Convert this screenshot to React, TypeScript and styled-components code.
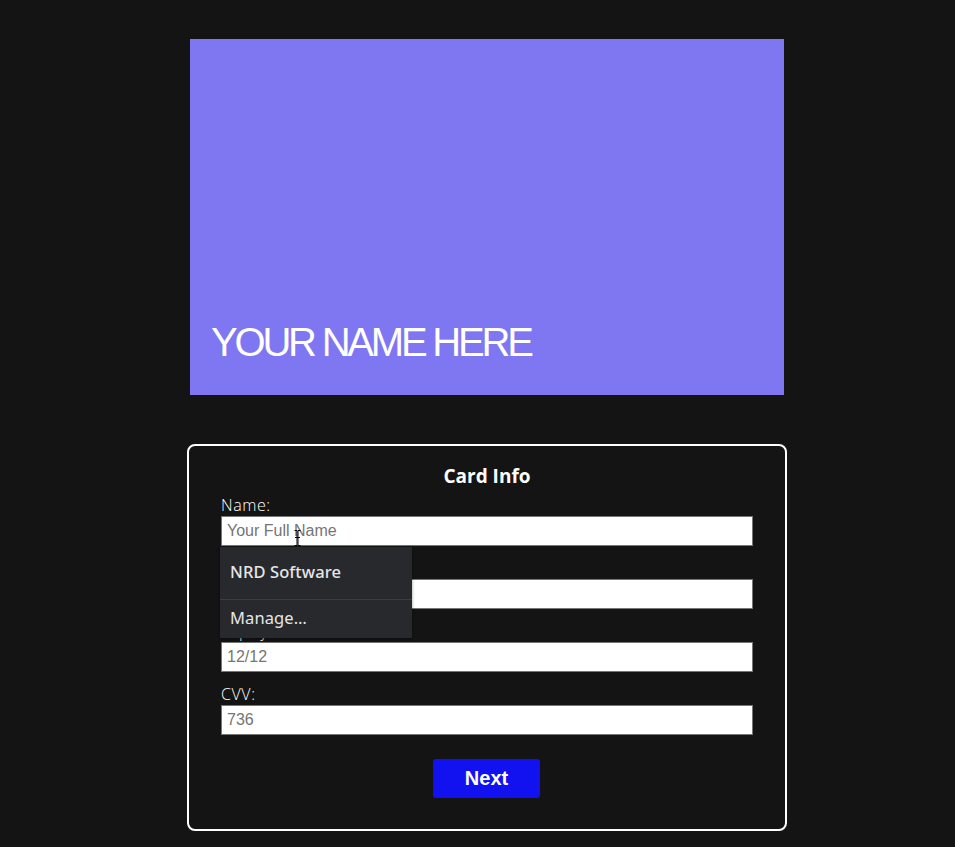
import React from "react";
import styled, { createGlobalStyle } from "styled-components";

const Global = createGlobalStyle`
  html, body {
    margin: 0;
    padding: 0;
    background: #141414;
  }
  body {
    font-family: "Liberation Sans", Arial, sans-serif;
  }
`;

const Page = styled.div`
  width: 600px;
  margin-left: 187px;
  padding-top: 39px;
  padding-bottom: 16px;
  display: flex;
  flex-direction: column;
  align-items: center;
  gap: 49px;
`;

const CreditCard = styled.div`
  width: 594px;
  height: 356px;
  background: #7f77f2;
  box-sizing: border-box;
  display: flex;
  flex-direction: column;
  justify-content: flex-end;
  padding: 0 21px 33px;
`;

const CardName = styled.div`
  color: #ffffff;
  font-family: "Liberation Sans", Arial, sans-serif;
  font-size: 40px;
  line-height: 40px;
  letter-spacing: -3.2px;
`;

const Form = styled.form`
  width: 600px;
  box-sizing: border-box;
  border: 2px solid #ffffff;
  border-radius: 8px;
  padding: 18px 32px 31px;
  display: flex;
  flex-direction: column;
`;

const Title = styled.h2`
  margin: 0 0 7px;
  text-align: center;
  color: #ffffff;
  font-family: "Open Sans", sans-serif;
  font-weight: 700;
  font-size: 19px;
  line-height: 24px;
`;

const Field = styled.div`
  position: relative;
  display: flex;
  flex-direction: column;
  margin-bottom: 12px;
`;

const Label = styled.label`
  color: #ffffff;
  font-family: "Open Sans", sans-serif;
  font-weight: 300;
  font-size: 16px;
  line-height: 21px;
  letter-spacing: 0.6px;
`;

const Input = styled.input`
  width: 532px;
  height: 30px;
  box-sizing: border-box;
  border: 1px solid #767676;
  background: #ffffff;
  padding: 0 5px;
  margin: 0;
  font-family: "Liberation Sans", Arial, sans-serif;
  font-size: 16px;
  outline: none;
  &::placeholder {
    color: #757575;
  }
`;

const Button = styled.button`
  align-self: center;
  margin-top: 12px;
  margin-right: 1px;
  width: 107px;
  height: 39px;
  border: none;
  border-radius: 3px;
  background: #1212f0;
  color: #ffffff;
  font-family: "Liberation Sans", Arial, sans-serif;
  font-weight: 700;
  font-size: 20px;
  cursor: pointer;
`;

const Autofill = styled.div`
  position: absolute;
  left: -1px;
  top: 52px;
  width: 192px;
  background: #28292d;
  z-index: 5;
  display: flex;
  flex-direction: column;
  box-shadow: 0 1px 3px rgba(0, 0, 0, 0.4);
`;

const AutofillItem = styled.div<{ $strong?: boolean; $h: number }>`
  height: ${(p) => p.$h}px;
  box-sizing: border-box;
  display: flex;
  align-items: center;
  padding: 0 10px 4px;
  color: #e6e6e8;
  font-family: "Noto Sans", "Open Sans", sans-serif;
  font-size: 16.5px;
  letter-spacing: 0.1px;
  font-weight: ${(p) => (p.$strong ? 500 : 400)};
`;

const Divider = styled.div`
  height: 1px;
  background: #3d3e42;
`;

const Cursor = styled.svg`
  position: absolute;
  left: 73px;
  top: 35px;
  z-index: 6;
`;

export default function App() {
  return (
    <>
      <Global />
      <Page>
        <CreditCard>
          <CardName>YOUR NAME HERE</CardName>
        </CreditCard>
        <Form onSubmit={(e) => e.preventDefault()}>
          <Title>Card Info</Title>
          <Field>
            <Label>Name:</Label>
            <Input placeholder="Your Full Name" />
            <Cursor width="7" height="16" viewBox="0 0 7 16">
              <path d="M0.5 0.5h2.5v15h-2.5M6.5 0.5h-2.5v15h2.5" fill="none" stroke="#000" strokeWidth="1" />
              <path d="M1 7.5h5" stroke="#000" strokeWidth="1" />
            </Cursor>
            <Autofill>
              <AutofillItem $strong $h={52}>NRD Software</AutofillItem>
              <Divider />
              <AutofillItem $h={38}>Manage…</AutofillItem>
            </Autofill>
          </Field>
          <Field>
            <Label>Card Number:</Label>
            <Input placeholder="" />
          </Field>
          <Field>
            <Label>Expiry:</Label>
            <Input placeholder="12/12" />
          </Field>
          <Field>
            <Label>CVV:</Label>
            <Input placeholder="736" />
          </Field>
          <Button type="submit">Next</Button>
        </Form>
      </Page>
    </>
  );
}
